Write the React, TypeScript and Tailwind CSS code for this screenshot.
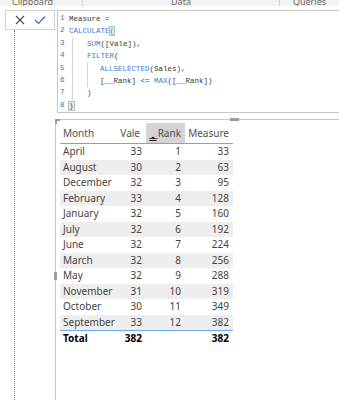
import React from "react";

const rows: [string, number, number, number][] = [
  ["April", 33, 1, 33],
  ["August", 30, 2, 63],
  ["December", 32, 3, 95],
  ["February", 33, 4, 128],
  ["January", 32, 5, 160],
  ["July", 32, 6, 192],
  ["June", 32, 7, 224],
  ["March", 32, 8, 256],
  ["May", 32, 9, 288],
  ["November", 31, 10, 319],
  ["October", 30, 11, 349],
  ["September", 33, 12, 382],
];

const kw = "text-[#3b7ad4]";

function Indent({ level }: { level: number }) {
  if (level === 0) return null;
  return (
    <>
      <span className="ml-[3px] h-full border-l border-[#d4d4d4] w-[15px] shrink-0" />
      {level > 1 && <span className="h-full border-l border-[#d4d4d4] w-[13px] shrink-0" />}
    </>
  );
}

function CodeLine({ n, level = 0, children }: { n: number; level?: number; children: React.ReactNode }) {
  return (
    <div className="flex h-[12.4px] items-stretch">
      <span className="w-[11px] pl-[2px] text-[#2d7db8]">{n}</span>
      <div className="flex items-stretch">
        <Indent level={level} />
        <span className="whitespace-pre leading-[12.4px]">{children}</span>
      </div>
    </div>
  );
}

export default function App() {
  return (
    <div className="relative flex h-[400px] w-[339px] flex-col overflow-hidden bg-white font-['Noto_Sans',sans-serif]">
      {/* ribbon bottom */}
      <div className="flex h-[6px] shrink-0 overflow-hidden bg-[#f3f3f3] text-[9px] leading-[9px] text-[#6a6a6a]">
        <div className="flex w-[83px] items-end border-r border-[#d0d0d0] pl-[12px]">
          <span>Clipboard</span>
        </div>
        <div className="flex w-[197px] items-end justify-center border-r border-[#d0d0d0]">
          <span>Data</span>
        </div>
        <div className="flex flex-1 items-end justify-center">
          <span>Queries</span>
        </div>
      </div>

      <div className="mt-[4px] flex flex-1">
        {/* left column */}
        <div className="flex w-[55px] shrink-0 flex-col">
          <div className="ml-[5px] flex h-[20px] w-[50px] items-center justify-around border border-[#d2d2d2] px-[4px]">
            <svg width="10" height="10" viewBox="0 0 10 10">
              <path d="M1 1 L9 9 M9 1 L1 9" stroke="#4a4a4a" strokeWidth="1.1" fill="none" />
            </svg>
            <svg width="12" height="10" viewBox="0 0 12 10">
              <path d="M1 5 L4.5 8.5 L11 1.5" stroke="#2e6bb3" strokeWidth="1.2" fill="none" />
            </svg>
          </div>
          <div className="ml-[14px] flex-1 border-l border-dotted border-[#777]" />
        </div>

        {/* right column */}
        <div className="flex flex-1 flex-col">
          <div className="ml-[2px] h-[103px] w-[300px] shrink-0 border border-[#c6c6c6] pt-[2px] font-['Liberation_Mono',monospace] text-[7.5px] text-[#3a3a3a]">
            <CodeLine n={1}>Measure =</CodeLine>
            <CodeLine n={2}>
              <span className={kw}>CALCULATE</span>
              <span className={`${kw} bg-[#e6ebe2] outline outline-1 outline-[#b9c2b4]`}>(</span>
            </CodeLine>
            <CodeLine n={3} level={1}>
              <span className={kw}>SUM</span>([Vale]),
            </CodeLine>
            <CodeLine n={4} level={1}>
              <span className={kw}>FILTER</span>(
            </CodeLine>
            <CodeLine n={5} level={2}>
              <span className={kw}>ALLSELECTED</span>(Sales),
            </CodeLine>
            <CodeLine n={6} level={2}>
              [__Rank] &lt;= <span className={kw}>MAX</span>([__Rank])
            </CodeLine>
            <CodeLine n={7} level={1}>)</CodeLine>
            <CodeLine n={8}>
              <span className="bg-[#e6ebe2] outline outline-1 outline-[#b9c2b4]">)</span>
            </CodeLine>
          </div>

          {/* visual */}
          <div className="relative mt-[6px] flex-1 border-l border-t border-[#c8c8c8] pl-[4px] pt-[3px]">
            <div className="absolute -left-px -top-px h-[5px] w-[5px] border-l-2 border-t-2 border-[#9a9a9a]" />
            <div className="absolute -top-[2px] left-[174px] h-[3px] w-[9px] bg-[#9c9c9c]" />
            <div className="absolute -left-[2px] top-[152px] h-[8px] w-[3px] bg-[#9c9c9c]" />

            <div className="grid w-[173px] grid-cols-[57px_29px_39px_48px] text-[10px] text-[#444]">
              {/* header */}
              <div className="flex h-[21px] items-center border-b border-[#6aaae6] pl-[3px] text-[#505050]">Month</div>
              <div className="flex h-[21px] items-center justify-end border-b border-[#6aaae6] pr-[6px] text-[#505050]">Vale</div>
              <div className="relative flex h-[21px] items-center justify-end border-b border-[#6aaae6] bg-[#d4d4d4] pr-[4px] text-[#505050]">
                __Rank
                <svg className="absolute bottom-[2px] left-[3px]" width="8" height="5" viewBox="0 0 8 5">
                  <path d="M1 3 L4 0.5 L7 3 Z" fill="#222" />
                  <path d="M0.5 4.5 H7.5" stroke="#222" strokeWidth="1" />
                </svg>
              </div>
              <div className="flex h-[21px] items-center justify-end border-b border-[#6aaae6] pr-[4px] text-[#505050]">Measure</div>

              {rows.map(([m, v, r, s], i) => {
                const bg = i % 2 === 1 ? "bg-[#eeeeee]" : "";
                return (
                  <React.Fragment key={m}>
                    <div className={`flex h-[15.5px] items-center pl-[3px] ${bg}`}>{m}</div>
                    <div className={`flex h-[15.5px] items-center justify-end pr-[4px] ${bg}`}>{v}</div>
                    <div className={`flex h-[15.5px] items-center justify-end pr-[4px] ${bg}`}>{r}</div>
                    <div className={`flex h-[15.5px] items-center justify-end pr-[4px] ${bg}`}>{s}</div>
                  </React.Fragment>
                );
              })}

              <div className="flex h-[15px] items-center border-t border-[#6aaae6] pl-[3px] font-bold text-black">Total</div>
              <div className="flex h-[15px] items-center justify-end border-t border-[#6aaae6] pr-[4px] font-bold text-black">382</div>
              <div className="h-[15px] border-t border-[#6aaae6]" />
              <div className="flex h-[15px] items-center justify-end border-t border-[#6aaae6] pr-[4px] font-bold text-black">382</div>
            </div>
          </div>
        </div>
      </div>
    </div>
  );
}
